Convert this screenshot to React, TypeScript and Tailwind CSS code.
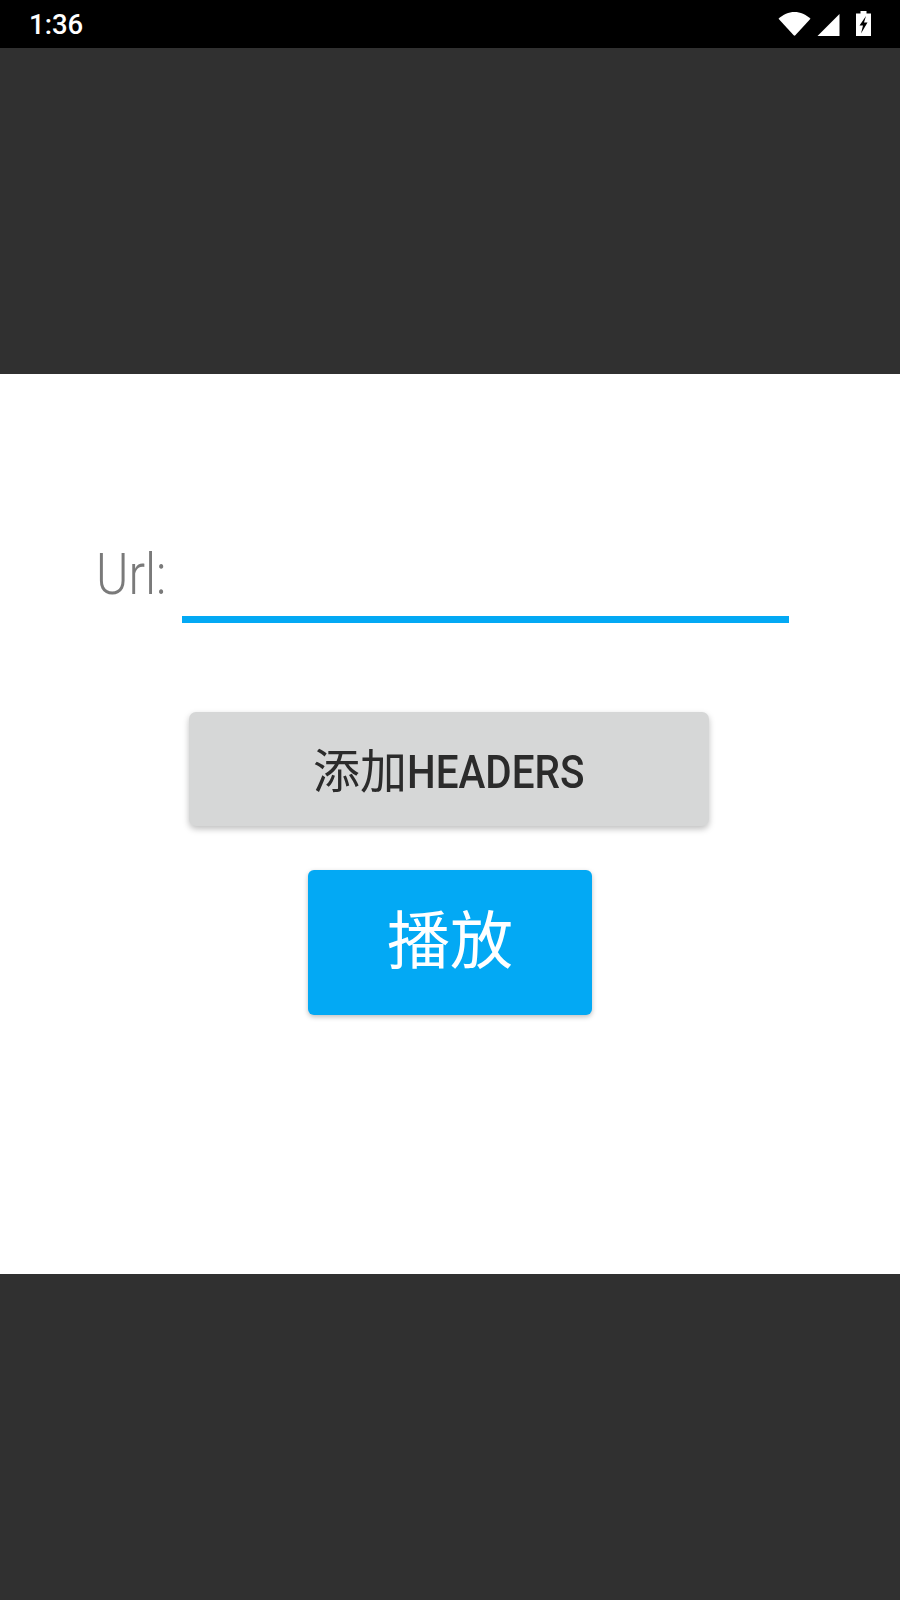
import React from "react";

const sans = "font-['Roboto','Noto_Sans_CJK_SC',sans-serif]";

function Wifi() {
  return (
    <svg width="33" height="25" viewBox="0 0 32 24" className="block">
      <path d="M0.5 7.5 C9 -1.5 23 -1.5 31.5 7.5 L16.8 23.5 Q16 24.2 15.2 23.5 Z" fill="#fff" />
    </svg>
  );
}

function Signal() {
  return (
    <svg width="23" height="22" viewBox="0 0 22 22" className="block">
      <path d="M22 0 V22 H0 Z" fill="#fff" />
    </svg>
  );
}

function Battery() {
  return (
    <svg width="15" height="25" viewBox="0 0 15 25" className="block">
      <path d="M4.5 0 H10.5 V2.5 H15 V25 H0 V2.5 H4.5 Z" fill="#fff" />
      <path d="M10 5 L3.5 14.5 H7 L5 22.5 L11.5 11.5 H8 Z" fill="#000" />
    </svg>
  );
}

export default function App() {
  return (
    <div className={`w-[900px] h-[1600px] flex flex-col bg-[#303030] ${sans}`}>
      <div className="h-12 bg-black flex items-center justify-between pl-[29px] pr-[29px]">
        <span className="text-white text-[27.5px] leading-none font-medium pt-[2px]">1:36</span>
        <div className="flex items-end pb-[1px]">
          <Wifi />
          <div className="ml-[6px]"><Signal /></div>
          <div className="ml-[16px]"><Battery /></div>
        </div>
      </div>
      <div className="h-[326px]" />
      <div className="h-[900px] bg-white flex flex-col">
        <div className="mt-[171px] flex items-end pl-[96px] blur-[0.7px]">
          <span className="text-[58px] leading-none font-light text-[#7a7a7a] mb-[20px] w-[86px] whitespace-nowrap origin-left scale-x-[0.85]">Url:</span>
          <div className="w-[607px] h-[7px] bg-[#03a9f4]" />
        </div>
        <div className="mt-[89px] flex flex-col items-center">
          <button className="mr-[2px] w-[520px] h-[114px] rounded-[7px] bg-[#d6d7d7] text-[#2b2b2b] leading-none shadow-[0_3px_6px_rgba(0,0,0,0.25)] flex items-center justify-center pt-[4px] pr-[2px] blur-[0.5px]">
            <span className="text-[47px] leading-none">添加</span>
            <span className="w-[176px] text-[47px] leading-none font-medium whitespace-nowrap origin-left scale-x-[0.86]">HEADERS</span>
          </button>
          <button className="mt-[44px] w-[284px] h-[145px] rounded-[6px] bg-[#03a9f4] text-white text-[63px] leading-none shadow-[0_2px_5px_rgba(0,0,0,0.25)] flex items-center justify-center pb-[2px] blur-[0.5px]">
            播放
          </button>
        </div>
      </div>
      <div className="flex-1" />
    </div>
  );
}
